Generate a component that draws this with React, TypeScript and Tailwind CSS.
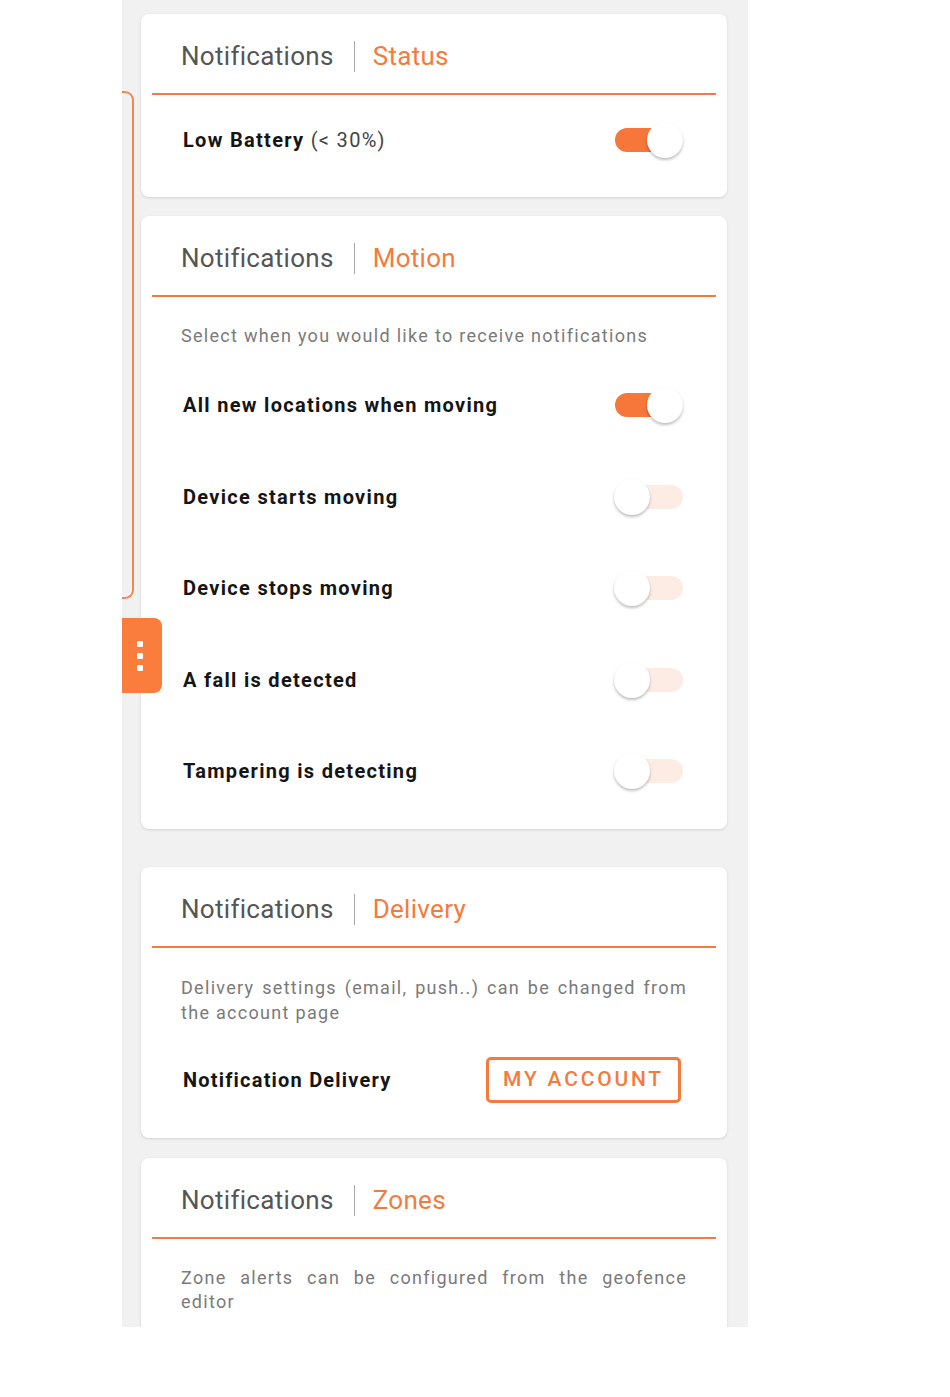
import React from "react";

const ORANGE = "text-[#f47b3d]";

function Toggle({ on }: { on: boolean }) {
  return (
    <div className="relative h-9 w-[70px] shrink-0">
      <div
        className={
          on
            ? "absolute left-px right-1.5 top-1.5 h-6 rounded-full bg-[#f7763a]"
            : "absolute left-1 right-px top-1.5 h-6 rounded-full bg-[#fdece4]"
        }
      />
      <div
        className={
          on
            ? "absolute right-px top-0 h-9 w-9 rounded-full bg-white shadow-[0_2px_3px_rgba(0,0,0,0.25)]"
            : "absolute left-0 top-0 h-9 w-9 rounded-full bg-white shadow-[0_2px_3px_rgba(0,0,0,0.25)]"
        }
      />
    </div>
  );
}

function CardHeader({ title }: { title: string }) {
  return (
    <div className="mx-[11px] border-b-2 border-[#f47b3d] px-[29px] pb-[21px] pt-[26px]">
      <div className="flex h-8 items-center text-[26px] leading-8 tracking-[0.3px]">
        <span className="text-[#555555]">Notifications</span>
        <span className="ml-[20px] mr-[18px] h-[31px] w-px bg-[#a8a8a8]" />
        <span className={ORANGE}>{title}</span>
      </div>
    </div>
  );
}

function Row({ label, on, first }: { label: React.ReactNode; on: boolean; first?: boolean }) {
  return (
    <div className={`flex h-[50px] items-center justify-between pl-[2px] ${first ? "" : "mt-[41.5px]"}`}>
      <span className="text-[20px] font-bold tracking-[1.3px] text-[#151515]">{label}</span>
      <div className="mr-[3px]">
        <Toggle on={on} />
      </div>
    </div>
  );
}

function Card({ children, className = "" }: { children: React.ReactNode; className?: string }) {
  return (
    <div className={`rounded-lg bg-white shadow-[0_1px_3px_rgba(0,0,0,0.13)] ${className}`}>
      {children}
    </div>
  );
}

export default function App() {
  return (
    <div className="min-h-[1397px] bg-white font-['Roboto',sans-serif]">
      <div className="relative ml-[122px] h-[1327px] w-[626px] overflow-hidden bg-[#f1f1f1] pl-[19px] pr-[21px] pt-[14px]">
        <div className="flex flex-col">
          <Card>
            <CardHeader title="Status" />
            <div className="px-10 pb-8 pt-5">
              <Row
                first
                on
                label={
                  <>
                    Low Battery <span className="font-normal text-[#444]">(&lt; 30%)</span>
                  </>
                }
              />
            </div>
          </Card>

          <Card className="mt-[19px]">
            <CardHeader title="Motion" />
            <div className="px-10 pb-[33px] pt-[27px]">
              <p className="text-[18px] leading-6 tracking-[1.3px] text-[#7a7a7a]">
                Select when you would like to receive notifications
              </p>
              <div className="mt-[32px]">
                <Row first on label="All new locations when moving" />
                <Row on={false} label="Device starts moving" />
                <Row on={false} label="Device stops moving" />
                <Row on={false} label="A fall is detected" />
                <Row on={false} label="Tampering is detecting" />
              </div>
            </div>
          </Card>

          <Card className="mt-[38px]">
            <CardHeader title="Delivery" />
            <div className="px-10 pb-[35px] pt-[27px]">
              <p className="text-justify text-[18px] leading-[25px] tracking-[1.3px] text-[#7a7a7a]">
                Delivery settings (email, push..) can be changed from the account page
              </p>
              <div className="mt-[32px] flex items-center justify-between pl-[2px]">
                <span className="text-[20px] font-bold tracking-[1.2px] text-[#151515]">
                  Notification Delivery
                </span>
                <button className="mr-[6px] h-[46px] w-[195px] rounded-[5px] border-[3px] border-[#f47b3d] text-[21px] font-medium tracking-[2.8px] text-[#f47b3d]">
                  MY ACCOUNT
                </button>
              </div>
            </div>
          </Card>

          <Card className="mt-5">
            <CardHeader title="Zones" />
            <div className="px-10 pb-8 pt-[27px]">
              <p className="text-justify text-[18px] leading-[24px] tracking-[1.3px] text-[#7a7a7a]">
                Zone alerts can be configured from the geofence editor
              </p>
            </div>
          </Card>
        </div>

        {/* side bracket + drawer handle */}
        <div className="absolute left-0 top-[91px] h-[508px] w-[12px] rounded-r-[9px] border-y-2 border-r-2 border-[#f4864f]" />
        <div className="absolute left-0 top-[618px] flex h-[75px] w-10 flex-col items-center justify-center gap-[6px] rounded-r-lg bg-[#fb7d3e] pr-1">
          <span className="h-[6px] w-[6px] rounded-[1px] bg-white" />
          <span className="h-[6px] w-[6px] rounded-[1px] bg-white" />
          <span className="h-[6px] w-[6px] rounded-[1px] bg-white" />
        </div>
      </div>
    </div>
  );
}
